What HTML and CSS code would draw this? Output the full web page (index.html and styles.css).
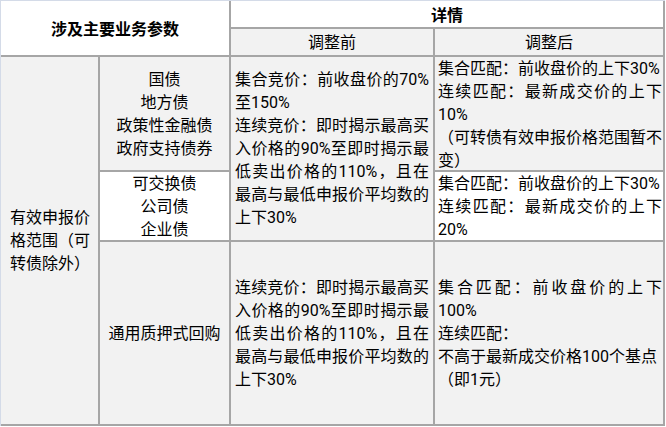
FILE: index.html
```html
<!DOCTYPE html>
<html lang="zh-CN">
<head>
<meta charset="utf-8">
<title>有效申报价格范围调整</title>
<link rel="stylesheet" href="styles.css">
</head>
<body>
<div class="tbl">
  <div class="c w ctr head param">涉及主要业务参数</div>
  <div class="c w ctr head detail">详情</div>
  <div class="c ctr sub before-h">调整前</div>
  <div class="c ctr sub after-h">调整后</div>

  <div class="c cat"><p>有效申报价格范围（可转债除外）</p></div>

  <div class="c ctr types r1">国债<br>地方债<br>政策性金融债<br>政府支持债券</div>
  <div class="c txt before r12"><p>集合竞价：前收盘价的70%至150%<br>连续竞价：即时揭示最高买入价格的90%至即时揭示最低卖出价格的110%，且在最高与最低申报价平均数的上下30%</p></div>
  <div class="c txt after r1 top"><p><span class="nw">集合匹配：前收盘价的上下30%</span><br>连续匹配：最新成交价的上下10%<br>（可转债有效申报价格范围暂不变）</p></div>

  <div class="c w ctr types r2">可交换债<br>公司债<br>企业债</div>
  <div class="c w txt after r2"><p><span class="nw">集合匹配：前收盘价的上下30%</span><br>连续匹配：最新成交价的上下20%</p></div>

  <div class="c ctr types r3">通用质押式回购</div>
  <div class="c txt before r3"><p>连续竞价：即时揭示最高买入价格的90%至即时揭示最低卖出价格的110%，且在最高与最低申报价平均数的上下30%</p></div>
  <div class="c txt after r3"><p>集合匹配：前收盘价的上下100%<br>连续匹配：<br>不高于最新成交价格100个基点<br>（即1元）</p></div>
</div>
</body>
</html>
```
FILE: styles.css
```css
body {
  margin: 0;
  background: #fff;
  font-family: Roboto, "Noto Sans CJK SC", sans-serif;
  font-size: 16px;
  line-height: 23px;
  color: #000;
}

.tbl {
  display: grid;
  grid-template-columns: 97px 129px 202px 228px;
  grid-template-rows: 26px 26px 113px 68px 182px;
  gap: 2px;
  width: max-content;
  background: #a6a6a6;
  border-top: 1px solid #d4dbe8;
  border-left: 1px solid #d4dbe8;
  padding: 0 2px 2px 0;
}

.c {
  display: flex;
  align-items: center;
  background: #f2f2f2;
  min-width: 0;
}

.c p {
  margin: 0;
  width: 100%;
  text-align: justify;
}

.nw { white-space: nowrap; }

.w { background: #fff; }

.ctr {
  justify-content: center;
  text-align: center;
}

.top { align-items: flex-start; }

.head {
  font-family: "Noto Sans CJK SC", sans-serif;
  font-weight: bold;
}

.param { grid-column: 1 / 3; grid-row: 1 / 3; }
.detail { grid-column: 3 / 5; grid-row: 1; }
.before-h { grid-column: 3; grid-row: 2; }
.after-h { grid-column: 4; grid-row: 2; }

.cat {
  grid-column: 1;
  grid-row: 3 / 6;
  padding: 0 8px 0 9px;
}

.types { grid-column: 2; }
.before { grid-column: 3; padding: 0 4px; }
.after { grid-column: 4; padding: 0 1px 0 3px; }

.r1 { grid-row: 3; }
.r2 { grid-row: 4; }
.r3 { grid-row: 5; }
.r12 { grid-row: 3 / 5; }
```
